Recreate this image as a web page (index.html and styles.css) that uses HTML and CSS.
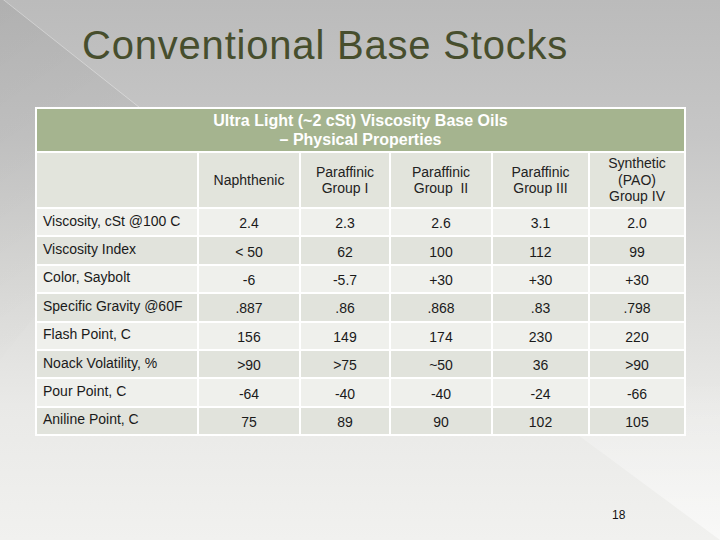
FILE: index.html
```html
<!DOCTYPE html>
<html>
<head>
<meta charset="utf-8">
<link rel="stylesheet" href="styles.css">
</head>
<body>
<div class="slide">
  <svg class="backdrop" width="720" height="540" viewBox="0 0 720 540" aria-hidden="true">
    <defs>
      <linearGradient id="tl" x1="0" y1="0" x2="0.3" y2="1">
        <stop offset="0" stop-color="#000" stop-opacity="0.06"/>
        <stop offset="1" stop-color="#000" stop-opacity="0"/>
      </linearGradient>
      <linearGradient id="br" x1="0" y1="1" x2="0" y2="0">
        <stop offset="0" stop-color="#fff" stop-opacity="0.55"/>
        <stop offset="1" stop-color="#fff" stop-opacity="0"/>
      </linearGradient>
    </defs>
    <polygon points="0,-3 178,138 0,360" fill="url(#tl)"/>
    <line x1="0" y1="-3" x2="178" y2="138" stroke="#fff" stroke-opacity="0.35" stroke-width="1"/>
    <polygon points="520,392 720,540 720,380" fill="url(#br)"/>
  </svg>
  <h1 class="title">Conventional Base Stocks</h1>
  <table class="props">
    <colgroup>
      <col class="c-label"><col class="c-n"><col class="c-p1"><col class="c-p2"><col class="c-p3"><col class="c-s">
    </colgroup>
    <thead>
      <tr class="head">
        <th colspan="6">Ultra Light (~2 cSt) Viscosity Base Oils<br>– Physical Properties</th>
      </tr>
      <tr class="cols">
        <th></th>
        <th>Naphthenic</th>
        <th>Paraffinic<br>Group I</th>
        <th>Paraffinic<br>Group&nbsp; II</th>
        <th>Paraffinic<br>Group III</th>
        <th>Synthetic<br>(PAO)<br>Group IV</th>
      </tr>
    </thead>
    <tbody>
      <tr class="light"><td>Viscosity, cSt @100 C</td><td>2.4</td><td>2.3</td><td>2.6</td><td>3.1</td><td>2.0</td></tr>
      <tr class="dark"><td>Viscosity Index</td><td>&lt; 50</td><td>62</td><td>100</td><td>112</td><td>99</td></tr>
      <tr class="light"><td>Color, Saybolt</td><td>-6</td><td>-5.7</td><td>+30</td><td>+30</td><td>+30</td></tr>
      <tr class="dark"><td>Specific Gravity @60F</td><td>.887</td><td>.86</td><td>.868</td><td>.83</td><td>.798</td></tr>
      <tr class="light"><td>Flash Point, C</td><td>156</td><td>149</td><td>174</td><td>230</td><td>220</td></tr>
      <tr class="dark"><td>Noack Volatility, %</td><td>&gt;90</td><td>&gt;75</td><td>~50</td><td>36</td><td>&gt;90</td></tr>
      <tr class="light"><td>Pour Point, C</td><td>-64</td><td>-40</td><td>-40</td><td>-24</td><td>-66</td></tr>
      <tr class="dark"><td>Aniline Point, C</td><td>75</td><td>89</td><td>90</td><td>102</td><td>105</td></tr>
    </tbody>
  </table>
  <div class="pageno">18</div>
</div>
</body>
</html>
```
FILE: styles.css
```css
html, body {
  margin: 0;
  padding: 0;
}
body {
  width: 720px;
  height: 540px;
  overflow: hidden;
  font-family: "Liberation Sans", Arial, sans-serif;
}
.slide {
  position: relative;
  width: 720px;
  height: 540px;
  background: linear-gradient(to bottom, #bbbbbb 0%, #c6c6c6 25%, #d8d8d6 50%, #e9e9e7 75%, #f1f1ef 100%);
  overflow: hidden;
}
.backdrop {
  position: absolute;
  left: 0;
  top: 0;
}
.title {
  position: relative;
  margin: 0;
  padding: 23px 0 0 82px;
  font-size: 40px;
  line-height: 44px;
  letter-spacing: 0.8px;
  font-weight: normal;
  color: #474e2d;
}
.props {
  position: relative;
  margin: 40px 0 0 35px;
  width: 649px;
  border-collapse: collapse;
  table-layout: fixed;
  font-size: 14px;
  color: #1a1a1a;
}
.props th, .props td {
  border: 2px solid #ffffff;
  padding: 0;
  font-weight: normal;
  text-align: center;
}
.c-label { width: 162px; }
.c-n { width: 102px; }
.c-p1 { width: 90px; }
.c-p2 { width: 102px; }
.c-p3 { width: 97px; }
.c-s { width: 96px; }
.head th {
  height: 42px;
  background: #a5b48f;
  color: #ffffff;
  font-size: 16px;
  line-height: 19px;
  font-weight: bold;
}
.cols th {
  height: 54px;
  background: #e2e4dc;
  line-height: 16.5px;
  color: #222;
}
.props tbody td {
  height: 24.4px;
  line-height: 16px;
  padding-top: 2px;
}
.props tbody td:first-child {
  text-align: left;
  padding: 0 0 3px 6px;
  height: 23.4px;
}
.light td { background: #eff0ec; }
.dark td { background: #e1e3dc; }
.pageno {
  position: relative;
  margin: 72px 0 0 612px;
  font-size: 12px;
  line-height: 14px;
  color: #111;
}
```
